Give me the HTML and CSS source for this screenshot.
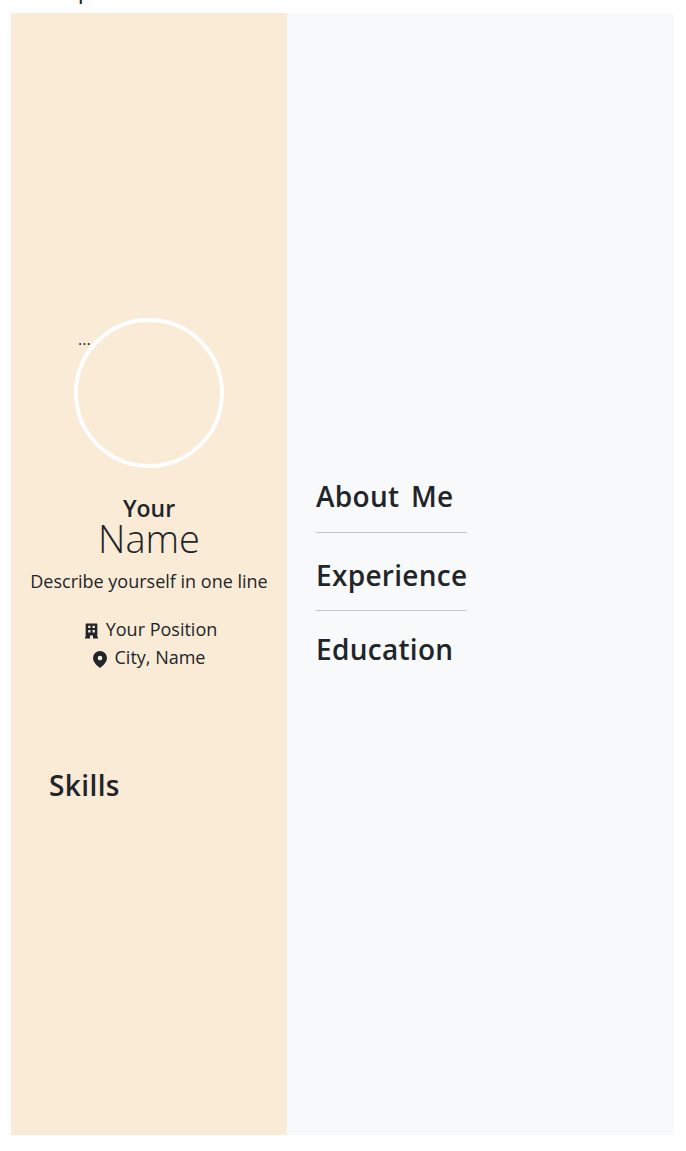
FILE: index.html
```html
<!DOCTYPE html>
<html lang="en">
<head>
    <meta charset="UTF-8">
    <meta name="viewport" content="width=device-width, initial-scale=1.0">
    <title>Resume</title>
    <link rel="stylesheet" href="styles.css">
</head>
<body>
    <div class="page-title"><span>Sample</span></div>
    <div class="resume">
        <div class="sidebar">
            <div class="photo"><span class="photo-alt">...</span></div>
            <h3 class="first-name">Your</h3>
            <h2 class="last-name">Name</h2>
            <p class="tagline">Describe yourself in one line</p>
            <div class="meta">
                <svg class="meta-icon" viewBox="0 0 14 16"><path d="M1.500 0h11q.8 0 .8.8V14.500h.7V16H8.600v-3.200H5.400V16H0v-1.500h.7V.8q0-.8.8-.8zM3.400 2.400v2.500h2.500V2.400zm4.700 0v2.500h2.500V2.400zM3.400 7v2.500h2.500V7zm4.700 0v2.500h2.500V7z" fill-rule="evenodd"/></svg>
                <span>Your Position</span>
            </div>
            <div class="meta">
                <svg class="meta-icon meta-icon-pin" viewBox="0 0 14 17"><path d="M7 0a7 7 0 0 1 7 7c0 4-4 7.800-7 10-3-2.200-7-6-7-10a7 7 0 0 1 7-7zm0 4.800a2.300 2.300 0 1 0 0 4.600 2.300 2.300 0 0 0 0-4.600z" fill-rule="evenodd"/></svg>
                <span>City, Name</span>
            </div>
            <h2 class="skills">Skills</h2>
        </div>
        <div class="main">
            <div class="sections">
                <h2 class="section">About Me</h2>
                <hr class="rule-first">
                <h2 class="section">Experience</h2>
                <hr>
                <h2 class="section">Education</h2>
            </div>
        </div>
    </div>
</body>
</html>
```

FILE: styles.css
```css
body {
    margin: 0;
    padding: 0 12px 16px 11px;
    font-family: "Open Sans", "Noto Sans", sans-serif;
    color: #212529;
    background-color: #fff;
}

h2, h3, p {
    margin: 0;
}

.page-title {
    height: 13px;
    overflow: hidden;
    font-size: 24px;
    line-height: 24px;
}

.page-title span {
    display: block;
    margin-top: -23px;
    padding-left: 18px;
}

.resume {
    display: flex;
    height: 1122px;
}

.sidebar {
    width: 276px;
    padding-top: 305px;
    box-sizing: border-box;
    background-color: #faebd7;
    text-align: center;
}

.photo {
    width: 150px;
    height: 150px;
    margin: 0 auto 26px;
    box-sizing: border-box;
    border: 4px solid #fff;
    border-radius: 50%;
    font-size: 16px;
    line-height: 22px;
    text-align: left;
}

.photo-alt {
    display: block;
    padding-top: 6px;
}

.first-name {
    font-size: 23px;
    font-weight: 600;
    line-height: 28px;
}

.last-name {
    font-size: 38px;
    font-weight: 300;
    line-height: 32px;
}

.tagline {
    margin: 14px 0 20px;
    font-size: 18px;
    line-height: 27px;
}

.meta {
    display: flex;
    justify-content: center;
    align-items: center;
    gap: 8px;
    padding-left: 2px;
    font-size: 18px;
    line-height: 28px;
}

.meta-icon {
    width: 13px;
    height: 16px;
    margin-top: 4px;
    margin-left: 2px;
    fill: #212529;
}

.meta-icon-pin {
    width: 14px;
    height: 17px;
    margin-top: 5px;
    margin-left: -2px;
}

.skills {
    margin-top: 96px;
    padding-left: 38px;
    font-size: 28px;
    font-weight: 600;
    line-height: 36px;
    letter-spacing: 0.4px;
    text-align: left;
}

.main {
    flex: 1;
    padding: 463px 0 0 29px;
    background-color: #f8f9fa;
}

.sections {
    display: inline-block;
}

.section {
    font-size: 28px;
    font-weight: 600;
    line-height: 40px;
    letter-spacing: 0.3px;
    word-spacing: 4px;
}

.sections hr {
    margin: 15px 0 18px;
    border: none;
    border-top: 1px solid #c4c5c7;
}

.sections .rule-first {
    margin: 16px 0 22px;
}
```
